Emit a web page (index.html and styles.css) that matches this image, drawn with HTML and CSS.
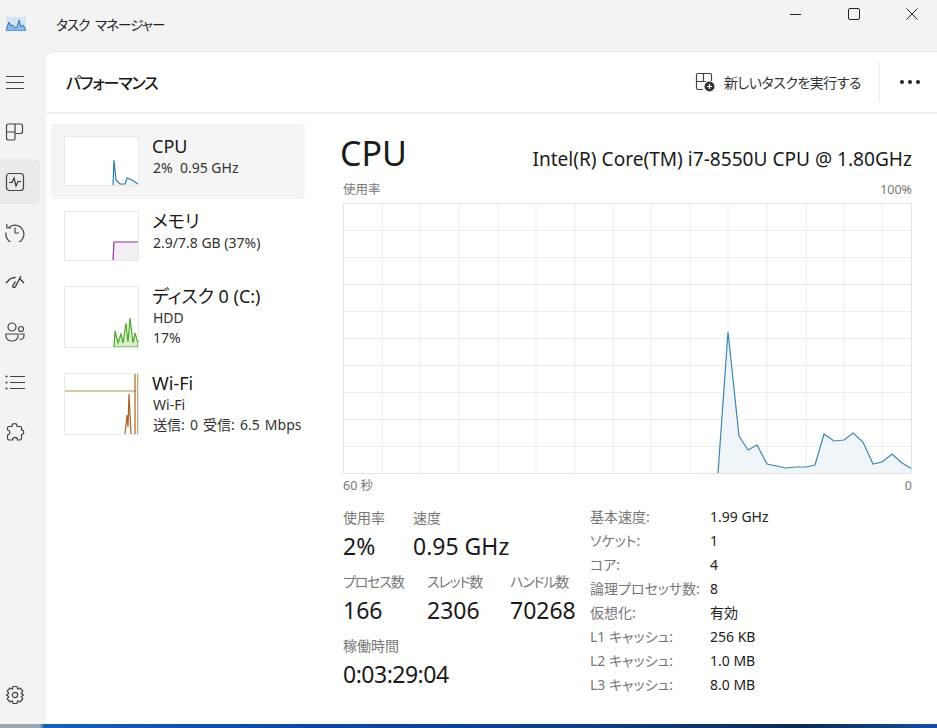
FILE: index.html
```html
<!DOCTYPE html>
<html lang="ja">
<head>
    <meta charset="UTF-8">
    <title>タスク マネージャー</title>
    <link rel="stylesheet" href="styles.css">
</head>
<body>
    <header class="titlebar">
        <svg class="app-icon" width="20" height="14" viewBox="0 0 20 14">
            <rect x="0" y="0" width="20" height="14" fill="#d5e4f3"/>
            <path d="M0 13 L3 5 L5 9 L7 8 L9 11 L11 10 L13 3 L15 10 L17 8 L20 13 V14 H0Z" fill="#8dbbe6" stroke="#2f77bd" stroke-width="1"/>
        </svg>
        <span class="app-title">タスク マネージャー</span>
        <div class="window-buttons">
            <svg width="12" height="12" viewBox="0 0 12 12"><path d="M0 6.500H11" stroke="#222" fill="none"/></svg>
            <svg width="12" height="12" viewBox="0 0 12 12"><rect x="0.500" y="0.500" width="11" height="11" rx="1.500" stroke="#222" fill="none"/></svg>
            <svg width="12" height="12" viewBox="0 0 12 12"><path d="M0.500 0.500L11.500 11.500M11.500 0.500L0.500 11.500" stroke="#222" fill="none"/></svg>
        </div>
    </header>

    <div class="window-body">
        <nav class="sidebar">
            <div class="nav-item">
                <svg width="20" height="20" viewBox="0 0 20 20"><path d="M1 4.500H19M1 10.500H19M1 16.500H19" stroke="#444" fill="none"/></svg>
            </div>
            <div class="nav-item">
                <svg width="20" height="20" viewBox="0 0 20 20"><path d="M10 2H3.500a2 2 0 0 0-2 2V16a2 2 0 0 0 2 2H8.500a1.500 1.500 0 0 0 1.500-1.500V2H15.500a2 2 0 0 1 2 2V9.500a2 2 0 0 1-2 2H10M1.500 10H10" stroke="#444" stroke-width="1.200" fill="none"/></svg>
            </div>
            <div class="nav-item active">
                <svg width="20" height="20" viewBox="0 0 20 20"><rect x="1.500" y="1.500" width="17" height="17" rx="3" stroke="#444" stroke-width="1.200" fill="none"/><path d="M4 10.500H7L9 6L11 14L13 9.500H16" stroke="#333" stroke-width="1.200" fill="none"/></svg>
            </div>
            <div class="nav-item">
                <svg width="20" height="20" viewBox="0 0 20 20"><path d="M3.800 5.500A9 9 0 1 1 1 10.500M1.800 2V6H6M10 5.500V11H14" stroke="#444" stroke-width="1.200" fill="none"/></svg>
            </div>
            <div class="nav-item">
                <svg width="20" height="20" viewBox="0 0 20 20"><path d="M1 11L5 7Q7.500 5.500 10.500 5.500M14.500 6.500L19 11M16 4L10.500 14.500C9.500 16.500 7 15.500 8 13.500L10.500 9.500" stroke="#333" stroke-width="1.300" fill="none"/></svg>
            </div>
            <div class="nav-item">
                <svg width="20" height="20" viewBox="0 0 20 20"><circle cx="7" cy="5" r="4" stroke="#444" stroke-width="1.200" fill="none"/><circle cx="16" cy="7" r="2.500" stroke="#444" stroke-width="1.200" fill="none"/><path d="M1 12H13V14.500C13 17 10 19 7 19C4 19 1 17 1 14.500ZM14.500 12H19V14C19 16 17 17.500 14.500 17.500" stroke="#444" stroke-width="1.200" fill="none"/></svg>
            </div>
            <div class="nav-item">
                <svg width="20" height="20" viewBox="0 0 20 20"><path d="M5 4.500H20M5 10.500H20M5 16.500H20" stroke="#444" stroke-width="1.200" fill="none"/><circle cx="1.500" cy="4.500" r="1.100" fill="#444"/><circle cx="1.500" cy="10.500" r="1.100" fill="#444"/><circle cx="1.500" cy="16.500" r="1.100" fill="#444"/></svg>
            </div>
            <div class="nav-item">
                <svg width="20" height="20" viewBox="0 0 20 20"><path d="M7 3.500C7 1 12 1 12 3.500V4.500H15.500C16.500 4.500 16.500 5 16.500 6V8C19.500 7.500 19.500 13 16.500 12.500V16C16.500 17.500 16 18 15 18H12.500C12.500 14.500 7.500 14.500 7.500 18H4C3 18 2.500 17.500 2.500 16V13C5.500 13 5.500 8 2.500 8V5.500C2.500 4.500 3 4.500 4 4.500H7Z" stroke="#444" stroke-width="1.200" fill="none"/></svg>
            </div>
            <div class="nav-item settings">
                <svg width="20" height="20" viewBox="0 0 20 20"><circle cx="10" cy="10" r="2.700" stroke="#444" stroke-width="1.200" fill="none"/><path d="M8 1.500H12L12.600 4.200L15 3L17.800 6L16.200 8.300L18.500 10L16.200 11.700L17.800 14L15 17L12.600 15.800L12 18.500H8L7.400 15.800L5 17L2.200 14L3.800 11.700L1.500 10L3.800 8.300L2.200 6L5 3L7.400 4.200Z" stroke="#444" stroke-width="1.200" stroke-linejoin="round" fill="none"/></svg>
            </div>
        </nav>

        <main class="panel">
            <div class="panel-header">
                <h1 class="panel-title">パフォーマンス</h1>
                <div class="run-task">
                    <svg width="20" height="20" viewBox="0 0 20 20">
                        <path d="M8.500 1.500H3a1.500 1.500 0 0 0-1.500 1.500V16a1.500 1.500 0 0 0 1.500 1.500H8M8.500 1.500V10M8.500 1.500H15a1.500 1.500 0 0 1 1.500 1.500V9M1.500 9.500H11" stroke="#444" stroke-width="1.200" fill="none"/>
                        <circle cx="14.500" cy="14.500" r="5" fill="#333"/>
                        <path d="M14.500 12V17M12 14.500H17" stroke="#fff" stroke-width="1.200"/>
                    </svg>
                    <span>新しいタスクを実行する</span>
                </div>
                <div class="header-divider"></div>
                <div class="more-dots"><i></i><i></i><i></i></div>
            </div>

            <div class="panel-body">
                <aside class="device-list">
                    <div class="device selected">
                        <svg class="thumb" width="75" height="50" viewBox="0 0 75 50">
                            <path class="cpu-fill" d="M49 49L50 24L52 44L56 48L61 48L63 42L68 44L71 46L74 48V49Z"/>
                            <path class="cpu-line" d="M49 49L50 24L52 44L56 48L61 48L63 42L68 44L71 46L74 48"/>
                        </svg>
                        <div class="device-text">
                            <div class="device-name">CPU</div>
                            <div class="device-sub">2%&nbsp; 0.95 GHz</div>
                        </div>
                    </div>
                    <div class="device">
                        <svg class="thumb" width="75" height="50" viewBox="0 0 75 50">
                            <path d="M49 49.500L50 31H75V49.500Z" fill="#f2eef3"/>
                            <path d="M49 49.500L50 31H75" stroke="#93329e" stroke-width="1.200" fill="none"/>
                        </svg>
                        <div class="device-text">
                            <div class="device-name">メモリ</div>
                            <div class="device-sub">2.9/7.8 GB (37%)</div>
                        </div>
                    </div>
                    <div class="device">
                        <svg class="thumb" width="75" height="62" viewBox="0 0 75 62">
                            <path d="M50 61L51 45L54 57L57 48L59 57L62 37L64 56L66 32L69 57L71 47L74 57V61Z" fill="#d9efc9" stroke="#4ea72e" stroke-width="1.200"/>
                        </svg>
                        <div class="device-text">
                            <div class="device-name">ディスク 0 (C:)</div>
                            <div class="device-sub">HDD</div>
                            <div class="device-sub">17%</div>
                        </div>
                    </div>
                    <div class="device">
                        <svg class="thumb wifi" width="75" height="62" viewBox="0 0 75 62">
                            <path d="M0 18H72" stroke="#b98a52" stroke-width="1.200" fill="none"/>
                            <path d="M61 61L63 42L64 54L65 21L67 61M71 0V61M74 0V61" stroke="#a8651f" stroke-width="1.200" fill="none"/>
                        </svg>
                        <div class="device-text">
                            <div class="device-name">Wi-Fi</div>
                            <div class="device-sub">Wi-Fi</div>
                            <div class="device-sub rate">送信: 0 受信: 6.5 Mbps</div>
                        </div>
                    </div>
                </aside>

                <section class="detail">
                    <div class="detail-head">
                        <h2 class="detail-title">CPU</h2>
                        <div class="cpu-model">Intel(R) Core(TM) i7-8550U CPU @ 1.80GHz</div>
                    </div>
                    <div class="chart-caption"><span>使用率</span><span>100%</span></div>
                    <svg class="chart" width="569" height="271" viewBox="0 0 569 271">
                        <path class="chart-grid" d="M39 0V271M77 0V271M116 0V271M155 0V271M193 0V271M232 0V271M270 0V271M308 0V271M347 0V271M385 0V271M424 0V271M463 0V271M501 0V271M539 0V271M0 27.500H569M0 54.500H569M0 81.500H569M0 108.500H569M0 135.500H569M0 162.500H569M0 189.500H569M0 216.500H569M0 243.500H569"/>
                        <path class="chart-fill" d="M375 270L385 129L396 233L405 247L414 242L424 261L443 265L453 264L463 264L472 262L481 231L491 238L501 237L510 230L520 239L530 261L539 259L549 251L559 260L569 266V270Z"/>
                        <path class="chart-line" d="M375 270L385 129L396 233L405 247L414 242L424 261L443 265L453 264L463 264L472 262L481 231L491 238L501 237L510 230L520 239L530 261L539 259L549 251L559 260L569 266"/>
                    </svg>
                    <div class="chart-caption under"><span>60 秒</span><span>0</span></div>

                    <div class="stats">
                        <div class="stats-main">
                            <div class="stat-row first">
                                <div class="stat"><div class="stat-label">使用率</div><div class="stat-value">2%</div></div>
                                <div class="stat"><div class="stat-label">速度</div><div class="stat-value">0.95 GHz</div></div>
                            </div>
                            <div class="stat-row second">
                                <div class="stat"><div class="stat-label kana">プロセス数</div><div class="stat-value">166</div></div>
                                <div class="stat"><div class="stat-label kana">スレッド数</div><div class="stat-value">2306</div></div>
                                <div class="stat"><div class="stat-label kana">ハンドル数</div><div class="stat-value">70268</div></div>
                            </div>
                            <div class="stat-row">
                                <div class="stat"><div class="stat-label">稼働時間</div><div class="stat-value uptime">0:03:29:04</div></div>
                            </div>
                        </div>
                        <dl class="specs">
                            <dt>基本速度:</dt><dd>1.99 GHz</dd>
                            <dt>ソケット:</dt><dd>1</dd>
                            <dt>コア:</dt><dd>4</dd>
                            <dt>論理プロセッサ数:</dt><dd>8</dd>
                            <dt>仮想化:</dt><dd>有効</dd>
                            <dt>L1 キャッシュ:</dt><dd>256 KB</dd>
                            <dt>L2 キャッシュ:</dt><dd>1.0 MB</dd>
                            <dt>L3 キャッシュ:</dt><dd>8.0 MB</dd>
                        </dl>
                    </div>
                </section>
            </div>
        </main>
    </div>
    <div class="taskbar"></div>
</body>
</html>
```

FILE: styles.css
```css
html, body {
    height: 100%;
}
body {
    margin: 0;
    display: flex;
    flex-direction: column;
    overflow: hidden;
    background-color: #f3f3f3;
    color: #1a1a1a;
    font-family: "Noto Sans", "Noto Sans CJK JP", sans-serif;
    font-size: 14px;
    font-feature-settings: "palt";
}
.titlebar {
    height: 52px;
    flex: none;
    display: flex;
    align-items: center;
    padding: 0 0 4px 6px;
    box-sizing: border-box;
}
.app-title {
    margin-left: 30px;
    font-size: 13.5px;
    letter-spacing: -0.9px;
    word-spacing: 3px;
    color: #222;
}
.window-buttons {
    margin-left: auto;
    align-self: flex-start;
    display: flex;
    gap: 46px;
    padding: 8px 19px 0 0;
}
.window-body {
    flex: 1;
    min-height: 0;
    display: flex;
}
.sidebar {
    width: 46px;
    flex: none;
    display: flex;
    flex-direction: column;
    padding: 5px 0 4px;
    box-sizing: border-box;
}
.nav-item {
    height: 50px;
    width: 40px;
    flex: none;
    display: flex;
    align-items: center;
    padding-left: 5px;
    box-sizing: border-box;
}
.nav-item.active {
    height: 45px;
    margin: 2px 0 3px;
    background-color: #eaeaea;
    border-radius: 0 6px 6px 0;
}
.nav-item.settings {
    margin-top: auto;
}
.panel {
    flex: 1;
    min-width: 0;
    display: flex;
    flex-direction: column;
    background: white;
    border-top-left-radius: 8px;
}
.panel-header {
    height: 60px;
    flex: none;
    display: flex;
    align-items: center;
    padding: 0 17px 0 20px;
    border-bottom: 2px solid #f0f0f0;
    box-shadow: 0 -1px 0 #e9e9e9;
    border-top-left-radius: 8px;
}
.panel-title {
    margin: 0;
    font-size: 16px;
    font-weight: 500;
    letter-spacing: -1.1px;
}
.run-task {
    margin-left: auto;
    display: flex;
    align-items: center;
    gap: 9px;
    letter-spacing: -0.5px;
    color: #333;
}
.header-divider {
    width: 1px;
    height: 40px;
    margin: 0 20px 0 18px;
    background-color: #eeeeee;
}
.more-dots {
    display: flex;
    gap: 4px;
}
.more-dots i {
    width: 4px;
    height: 4px;
    border-radius: 50%;
    background-color: #222;
}
.panel-body {
    flex: 1;
    min-height: 0;
    display: flex;
}
.device-list {
    width: 259px;
    flex: none;
    padding: 10px 0 0 5px;
    box-sizing: border-box;
}
.device {
    display: flex;
    gap: 13px;
    padding: 12px 13px 13px;
    border-radius: 4px;
}
.device.selected {
    background-color: #f5f5f5;
}
.thumb {
    flex: none;
    background: white;
    outline: 1px solid #e8e8e8;
    outline-offset: -1px;
}
.thumb.wifi {
    overflow: visible;
}
.device-text {
    margin-top: -2px;
    white-space: nowrap;
}
.device-name {
    font-size: 18px;
    line-height: 24px;
}
.device-sub {
    margin-left: 1px;
    line-height: 20px;
    color: #333;
}
.device-sub.rate {
    word-spacing: 1.500px;
}
.cpu-fill {
    fill: #eef4f9;
}
.cpu-line {
    fill: none;
    stroke: #2f7ea8;
    stroke-width: 1.2;
}
.detail {
    flex: 1;
    min-width: 0;
    padding: 16px 25px 0 38px;
}
.detail-head {
    display: flex;
    justify-content: space-between;
    align-items: baseline;
    margin-bottom: 5px;
}
.detail-title {
    margin: 0 0 0 -3px;
    font-size: 34px;
    font-weight: 400;
    line-height: 46px;
}
.cpu-model {
    font-size: 19.1px;
}
.chart-caption {
    display: flex;
    justify-content: space-between;
    font-size: 12.5px;
    line-height: 18px;
    color: #777;
    margin-bottom: 4px;
}
.chart-caption.under {
    margin: 3px 0 0;
}
.chart {
    display: block;
    outline: 1px solid #e4e4e4;
    outline-offset: -1px;
}
.chart-grid {
    fill: none;
    stroke: #ececec;
    stroke-width: 1;
}
.chart-fill {
    fill: #f0f5f9;
}
.chart-line {
    fill: none;
    stroke: #3f86ad;
    stroke-width: 1.2;
}
.stats {
    display: flex;
    margin-top: 13px;
}
.stats-main {
    width: 247px;
    flex: none;
    display: flex;
    flex-direction: column;
    gap: 8px;
}
.stat-row {
    display: flex;
}
.stat-row.first .stat:first-child {
    width: 70px;
}
.stat-row.second .stat:nth-child(1) {
    width: 84px;
}
.stat-row.second .stat:nth-child(2) {
    width: 83px;
}
.stat-label {
    line-height: 20px;
    color: #777;
}
.stat-label.kana {
    letter-spacing: -1.200px;
}
.stat-value {
    font-size: 23px;
    line-height: 36px;
}
.stat-value.uptime {
    letter-spacing: -0.500px;
}
.specs {
    margin: -4px 0 0;
    display: grid;
    grid-template-columns: 120px auto;
    grid-auto-rows: 24px;
    align-items: center;
}
.specs dt {
    color: #777;
}
.specs dd {
    margin: 0;
    color: #222;
}
.taskbar {
    height: 4px;
    flex: none;
    background: linear-gradient(90deg, #9aa6b0 0, #9aa6b0 40px, #1561b3 44px, #0b4aa0 300px, #123d85 600px, #0c2a55 800px, #154f9d 937px);
}
```
